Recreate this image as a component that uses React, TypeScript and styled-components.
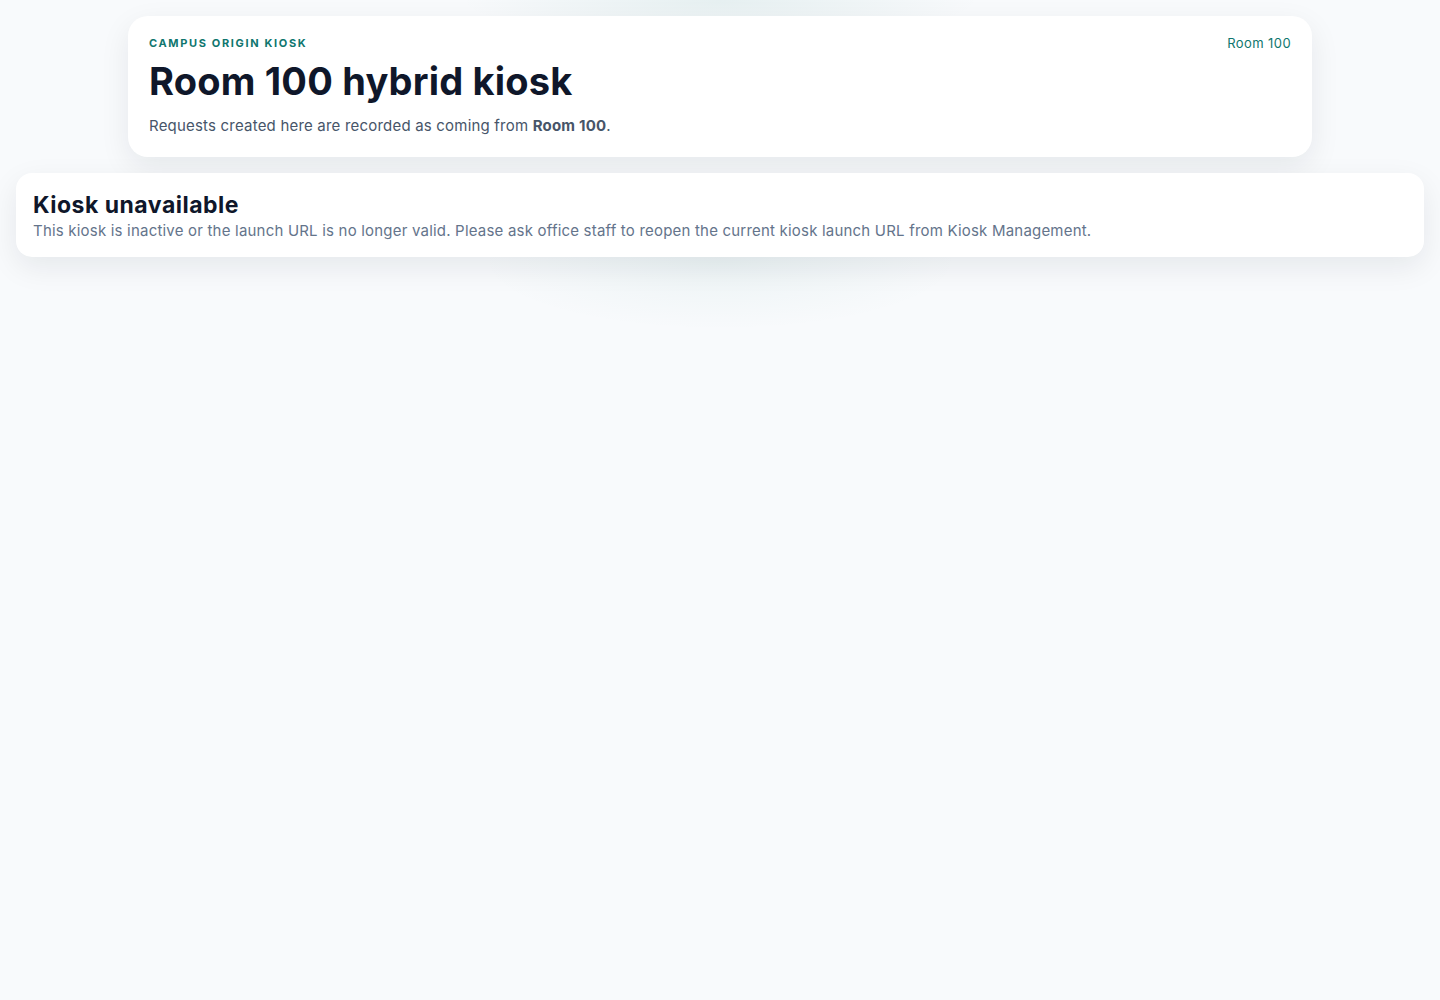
import React from "react";
import styled, { createGlobalStyle } from "styled-components";

const GlobalStyle = createGlobalStyle`
  html, body {
    margin: 0;
    padding: 0;
    min-height: 100%;
  }
  body {
    font-family: Inter, "Noto Sans", "Liberation Sans", sans-serif;
    background: #f8fafc;
    color: #0f172a;
  }
`;

const Page = styled.div`
  min-height: 1000px;
  box-sizing: border-box;
  padding: 16px 16px;
  display: flex;
  flex-direction: column;
  align-items: center;
  gap: 16px;
  background:
    radial-gradient(ellipse 260px 40px at 720px 0px, rgba(15, 118, 110, 0.08), transparent 100%),
    radial-gradient(ellipse 240px 70px at 720px 260px, rgba(15, 118, 110, 0.05), transparent 100%),
    #f8fafc;
`;

const HeaderCard = styled.header`
  width: 1184px;
  box-sizing: border-box;
  background: #ffffff;
  border-radius: 20px;
  padding: 20px 21px 20px;
  box-shadow: 0 10px 30px rgba(15, 23, 42, 0.08);
  display: flex;
  justify-content: space-between;
  align-items: flex-start;
`;

const HeaderText = styled.div`
  display: flex;
  flex-direction: column;
`;

const Eyebrow = styled.div`
  font-size: 11px;
  font-weight: 700;
  letter-spacing: 0.15em;
  text-transform: uppercase;
  color: #0f766e;
  line-height: 14px;
`;

const Title = styled.h1`
  margin: 9px 0 0;
  font-size: 38px;
  font-weight: 700;
  letter-spacing: 0.2px;
  line-height: 44px;
  color: #0f172a;
`;

const Subtitle = styled.p`
  margin: 12px 0 0;
  font-size: 15px;
  letter-spacing: 0.2px;
  line-height: 22px;
  color: #475569;

  strong {
    font-weight: 700;
  }
`;

const RoomTag = styled.div`
  font-size: 13px;
  letter-spacing: 0.4px;
  line-height: 14px;
  color: #0f766e;
`;

const NoticeCard = styled.section`
  align-self: stretch;
  box-sizing: border-box;
  background: #ffffff;
  border-radius: 16px;
  padding: 18px 17px 15px;
  box-shadow: 0 10px 30px rgba(15, 23, 42, 0.08);
`;

const NoticeTitle = styled.h2`
  margin: 0;
  font-size: 23px;
  font-weight: 700;
  letter-spacing: 0.5px;
  line-height: 28px;
  color: #0f172a;
`;

const NoticeBody = styled.p`
  margin: 1px 0 0;
  font-size: 15px;
  letter-spacing: 0.2px;
  line-height: 22px;
  color: #64748b;
`;

export default function App() {
  return (
    <>
      <GlobalStyle />
      <Page>
        <HeaderCard>
          <HeaderText>
            <Eyebrow>Campus origin kiosk</Eyebrow>
            <Title>Room 100 hybrid kiosk</Title>
            <Subtitle>
              Requests created here are recorded as coming from <strong>Room 100</strong>.
            </Subtitle>
          </HeaderText>
          <RoomTag>Room 100</RoomTag>
        </HeaderCard>
        <NoticeCard>
          <NoticeTitle>Kiosk unavailable</NoticeTitle>
          <NoticeBody>
            This kiosk is inactive or the launch URL is no longer valid. Please ask office staff to
            reopen the current kiosk launch URL from Kiosk Management.
          </NoticeBody>
        </NoticeCard>
      </Page>
    </>
  );
}
